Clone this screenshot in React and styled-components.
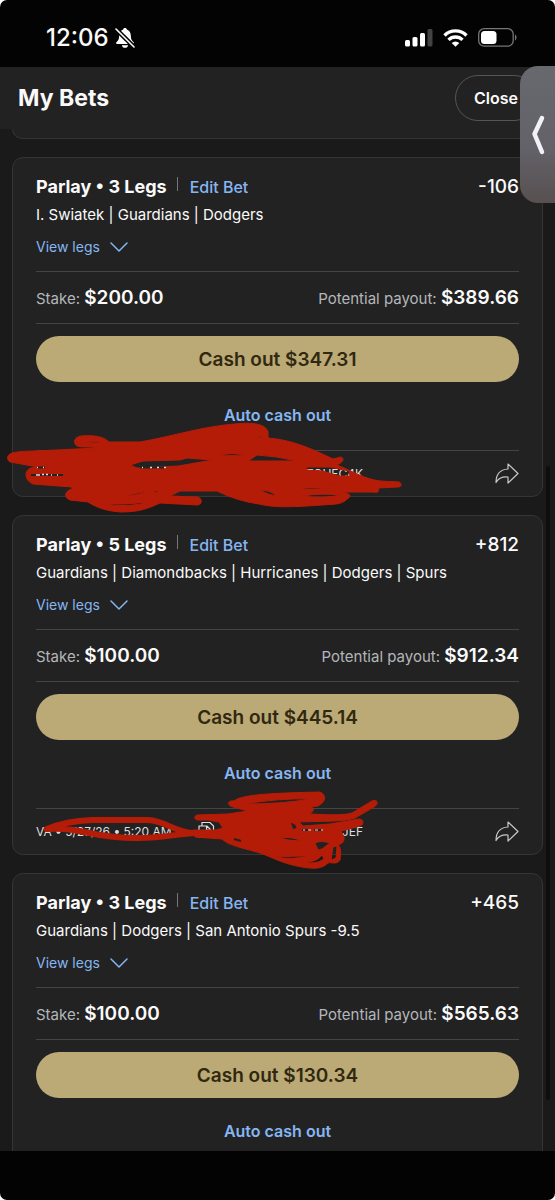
import React from "react";
import styled, { createGlobalStyle } from "styled-components";

const Global = createGlobalStyle`
  * { box-sizing: border-box; }
  body { margin: 0; background: #fff; font-family: Inter, "Liberation Sans", sans-serif; color: #fafafa; }
  button { font: inherit; border: 0; background: none; padding: 0; cursor: pointer; }
`;

const Screen = styled.div`
  position: relative;
  display: flex;
  flex-direction: column;
  height: 100vh;
  overflow: hidden;
  border-radius: 7px;
  background: #030303;
`;

const StatusBar = styled.div`
  display: flex;
  align-items: center;
  justify-content: space-between;
  flex: none;
  height: 67px;
  padding: 8px 38px 0 46px;
`;

const Clock = styled.div`
  display: flex;
  align-items: center;
  gap: 6px;
  font-size: 24px;
  line-height: 28px;
  font-weight: 500;
`;

const StatusIcons = styled.div`
  display: flex;
  align-items: center;
  gap: 10px;
`;

const Header = styled.header`
  display: flex;
  align-items: center;
  justify-content: space-between;
  flex: none;
  height: 62px;
  padding: 0 18px;
  background: #222;
`;

const Title = styled.h1`
  margin: 0;
  font-size: 23px;
  line-height: 28px;
  font-weight: 700;
`;

const CloseButton = styled.button`
  height: 46px;
  padding: 0 18px;
  border: 1px solid #555;
  border-radius: 23px;
  color: #fafafa;
  font-size: 16px;
  font-weight: 600;
`;

const Feed = styled.main`
  position: relative;
  display: flex;
  flex-direction: column;
  gap: 18px;
  flex: 1;
  overflow: hidden;
  padding: 0 12px;
  background: #1a1a1a;
`;

const PreviousCard = styled.div`
  flex: none;
  height: 10px;
  border: 1px solid #333;
  border-top: 0;
  border-radius: 0 0 10px 10px;
  background: #222;
`;

const Card = styled.article`
  position: relative;
  flex: none;
  padding: 17px 23px 0;
  border: 1px solid #353535;
  border-radius: 11px;
  background: #222;
`;

const TitleRow = styled.div`
  display: flex;
  align-items: center;
  line-height: 24px;
`;

const BetName = styled.h2`
  margin: 0;
  font-size: 18px;
  line-height: 24px;
  font-weight: 700;
`;

const Separator = styled.span`
  width: 1px;
  height: 14px;
  margin: 0 12px 6px 10px;
  background: #777;
`;

const LinkButton = styled.button`
  color: #86b6f2;
  font-size: ${(p) => (p.$light ? 14 : 16)}px;
  line-height: 20px;
  font-weight: ${(p) => (p.$light ? 400 : p.$strong ? 600 : 500)};
`;

const Odds = styled.span`
  margin-left: auto;
  font-size: 19px;
  font-weight: 500;
`;

const Legs = styled.p`
  margin: 6px 0 12px;
  font-size: 15px;
  line-height: 20px;
`;

const ViewLegs = styled(LinkButton)`
  display: flex;
  align-items: center;
  gap: 10px;
  margin-bottom: 14px;
`;

const MoneyRow = styled.div`
  display: flex;
  align-items: center;
  justify-content: space-between;
  height: 53px;
  padding-top: 2px;
  border: solid #444;
  border-width: 1px 0;
`;

const Money = styled.span`
  color: #b4b7ba;
  font-size: 15px;
  line-height: 24px;

  strong {
    color: #fafafa;
    font-size: 19px;
    font-weight: 600;
  }
`;

const CashOut = styled.button`
  display: block;
  width: 100%;
  height: 46px;
  margin-top: 12px;
  border-radius: 23px;
  background: #bba976;
  color: #30280f;
  font-size: 19px;
  font-weight: 600;
`;

const AutoRow = styled.div`
  display: flex;
  justify-content: center;
  padding: 23px 0 25px;
`;

const Footer = styled.footer`
  display: flex;
  align-items: center;
  height: 46px;
  border-top: 1px solid #444;
  color: #dedede;
  font-size: 12px;
  line-height: 16px;
`;

const Place = styled.span`
  flex: none;
  width: 162px;
`;

const Ticket = styled.span`
  display: flex;
  align-items: center;
  justify-content: space-between;
  width: 165px;
`;

const ShareButton = styled.button`
  display: flex;
  margin-left: auto;
`;

const Scribble = styled.svg`
  position: absolute;
  left: -13px;
  bottom: -21px;
  z-index: 2;
  pointer-events: none;
`;

const ScrollThumb = styled.div`
  position: absolute;
  top: 466px;
  right: 5px;
  bottom: 100px;
  width: 4px;
  border-radius: 2px;
  background: #0e0e0e;
`;

const SideTab = styled.button`
  && {
    position: absolute;
    top: 66px;
    right: 0;
    width: 35px;
    height: 137px;
    display: flex;
    align-items: center;
    justify-content: center;
    border-radius: 18px 0 0 18px;
    background: linear-gradient(#68686f, #626268 60%, #585051);
  }
`;

const BottomBar = styled.div`
  flex: none;
  height: 49px;
`;

const BellOff = () => (
  <svg width="20" height="22" viewBox="0 0 20 22" aria-hidden="true">
    <path fill="#fff" d="M10 1c-1 0-1.800.7-1.900 1.600C5.500 3.500 4.300 5.800 4.200 8.500c-.1 3.500-.8 5-2.600 6.400-.9.700-.6 2 .6 2h15.600c1.200 0 1.500-1.300.6-2-1.800-1.400-2.500-2.900-2.600-6.400-.1-2.700-1.300-5-3.900-5.900C11.800 1.700 11 1 10 1zM6.800 18.200h6.400c-.3 1.700-1.600 2.600-3.200 2.600s-2.900-.9-3.200-2.600z" />
    <path d="M1 2l18 18" stroke="#030303" strokeWidth="4.500" />
    <path d="M1 2l18 18" stroke="#fff" strokeWidth="1.600" strokeLinecap="round" />
  </svg>
);

const Signal = () => (
  <svg width="28" height="18" viewBox="0 0 28 18" aria-hidden="true">
    <g fill="#fff">
      <rect x="0" y="11" width="5" height="6.500" rx="1.500" />
      <rect x="7.500" y="8" width="5" height="9.500" rx="1.500" />
      <rect x="15" y="4" width="5" height="13.500" rx="1.500" />
      <rect x="22.500" y="0" width="5" height="17.500" rx="1.500" opacity=".25" />
    </g>
  </svg>
);

const Wifi = () => (
  <svg width="25" height="18" viewBox="0 0 25 18" aria-hidden="true">
    <g fill="none" stroke="#fff" strokeWidth="3.400">
      <path d="M1.500 6.500a15.500 15.500 0 0 1 22 0" />
      <path d="M5.500 10.900a9.900 9.900 0 0 1 14 0" />
    </g>
    <path fill="#fff" d="M8.700 13.900a5.500 5.500 0 0 1 7.600 0l-3.800 3.800z" />
  </svg>
);

const Battery = () => (
  <svg width="39" height="19" viewBox="0 0 39 19" aria-hidden="true">
    <rect x=".7" y=".7" width="34.500" height="17.500" rx="5.500" fill="none" stroke="#777" strokeWidth="1.300" />
    <rect x="3" y="3" width="15.500" height="13" rx="3.500" fill="#fff" />
    <path d="M37 6.500c2 .8 2 5 0 6z" fill="#777" />
  </svg>
);

const Chevron = () => (
  <svg width="18" height="10" viewBox="0 0 18 10" aria-hidden="true">
    <path d="M1 1l8 8 8-8" fill="none" stroke="#86b6f2" strokeWidth="1.500" strokeLinecap="round" strokeLinejoin="round" />
  </svg>
);

const Share = () => (
  <svg width="24" height="21" viewBox="0 0 24 21" aria-hidden="true">
    <path d="M13 1l10 9.500L13 20v-6C7.500 13.500 3.500 15 1 19.500 1 11 5.500 6.500 13 6z" fill="none" stroke="#c8c8c8" strokeWidth="1.200" strokeLinejoin="round" />
  </svg>
);

const Copy = () => (
  <svg width="17" height="17" viewBox="0 0 17 17" aria-hidden="true">
    <path d="M4 5V1.500h8L15.500 5v7H12M1 5h8l3 3v8H1zM8.500 5v4H12" fill="none" stroke="#dedede" strokeWidth="1.200" />
  </svg>
);

const ink = "#b51c08";

const WideScribble = () => (
  <Scribble width="420" height="101" viewBox="0 417 420 101" aria-hidden="true">
    <path
      fill={ink}
      stroke={ink}
      strokeLinejoin="round"
      fillRule="evenodd"
      d="M10 463C6 460 7 456 12 454Q20 452 35 452L98 449C90 447 83 449 77 447C72 443 75 438 81 437C93 436 103 437 109 443L140 443C170 438 204 427 235 425C252 423 266 425 268 433L268 439C293 441 312 450 333 460L341 458C345 460 343 463 337 466C350 471 364 480 380 482L399 483C402 484 402 488 398 488L378 489C380 493 377 494 373 493L340 493C350 494 353 497 347 500C342 506 333 505 322 506C293 508 276 509 259 505Q237 502 217 492L180 492L170 497L198 498C203 500 202 506 197 506L160 504C149 509 140 513 121 513C105 512 96 508 88 503L70 501C63 498 65 492 72 490L72 488L33 485C24 481 24 471 31 469L38 468Z
      M130 466L143 462L180 461L187 459L213 461L178 467L137 469Z
      M217 455Q232 454 247 455Q232 458 217 455Z
      M248 462L257 456Q276 457 297 462Z
      M256 438L262 437L261 439Z
      M85 443Q95 441 101 444Q93 444 85 443Z
      M306 468L330 468L349 472L350 477L340 477L322 472L307 471Z
      M320 480L327 484L344 487L328 485Z
      M299 490Q310 487 326 490Z
      M260 491Q270 491 277 497Q268 496 260 491ZM302 497Q320 494 341 496Q322 500 302 497Z
      M103 505Q125 506 150 503Q127 509 103 505Z
      M123 497Q135 495 147 492Q139 497 123 497ZM153 492L159 492L156 494Z"
    />
    <path d="M31 476h32M37 468.500h8M140 468.500h26" stroke="#222" strokeWidth="2" />
    <path d="M36 476h4M42 475.500h2M46 475.500h2M51 476h1M57 476h1M37 468.500h1M43 468.500h1M142 468.500h1M150 468.500h2M157 468.500h2M164 468.500h2" stroke="#dedede" strokeWidth="1.500" />
  </Scribble>
);

const LoopScribble = () => (
  <Scribble width="420" height="101" viewBox="0 776 420 101" aria-hidden="true">
    <path d="M47 831Q66 823 92 822L148 822C166 823 174 834 193 835L222 835M47 831C83 829 90 840 137 840C165 840 176 836 195 835" fill="none" stroke={ink} strokeWidth="6" strokeLinecap="round" strokeLinejoin="round" />
    <path
      fill={ink}
      stroke={ink}
      strokeLinejoin="round"
      fillRule="evenodd"
      d="M197 817L228 816L248 813L233 809C226 807 228 802 234 803C242 796 279 795 320 794C327 797 326 804 318 808L310 809C315 809 314 814 310 815L310 816Q344 818 352 815L372 803C378 801 379 806 374 809L355 820C344 824 318 823 299 824L303 828L330 826L359 821C364 821 364 827 360 828L341 833L344 839C345 845 340 846 338 847C341 849 341 855 340 862C337 867 331 864 328 865C322 871 314 871 302 869C282 866 268 857 257 854C242 850 228 847 222 841L195 839L193 832L216 832L223 830L219 824L208 822L197 822C194 821 194 818 197 817Z
      M244 806Q280 800 310 801Q283 806 244 806Z
      M290 824Q297 826 297 830L293 832Z
      M280 840Q292 838 301 843L288 842Z
      M315 845Q321 842 330 845L322 851L318 852Z
      M268 850L303 852L282 851Z
      M275 859Q295 858 309 858Q293 862 275 859Z
      M306 864Q317 864 322 857L324 861Q315 867 306 864Z
      M333 849L337 848L336 860L331 862Z"
    />
    <path d="M234 841l7 2M302 832h7M314 832h8" stroke="#222" strokeWidth="2" />
    <path d="M303 832h2M308 832h3M315 832h3M321 832h2" stroke="#dedede" strokeWidth="1" />
  </Scribble>
);

const bets = [
  { name: "Parlay • 3 Legs", odds: "-106", legs: "I. Swiatek | Guardians | Dodgers", stake: "$200.00", payout: "$389.66", cash: "$347.31",
    footer: { place: "VA", code: "TQHFC4K", mark: WideScribble } },
  { name: "Parlay • 5 Legs", odds: "+812", legs: "Guardians | Diamondbacks | Hurricanes | Dodgers | Spurs", stake: "$100.00", payout: "$912.34", cash: "$445.14",
    footer: { place: "VA • 5/27/26 • 5:20 AM", code: "JEF", copy: true, mark: LoopScribble } },
  { name: "Parlay • 3 Legs", odds: "+465", legs: "Guardians | Dodgers | San Antonio Spurs -9.5", stake: "$100.00", payout: "$565.63", cash: "$130.34" },
];

function BetCard({ bet }) {
  const { footer } = bet;
  const Mark = footer?.mark;
  return (
    <Card>
      <TitleRow>
        <BetName>{bet.name}</BetName>
        <Separator />
        <LinkButton>Edit Bet</LinkButton>
        <Odds>{bet.odds}</Odds>
      </TitleRow>
      <Legs>{bet.legs}</Legs>
      <ViewLegs $light>View legs <Chevron /></ViewLegs>
      <MoneyRow>
        <Money>Stake: <strong>{bet.stake}</strong></Money>
        <Money>Potential payout: <strong>{bet.payout}</strong></Money>
      </MoneyRow>
      <CashOut>Cash out {bet.cash}</CashOut>
      <AutoRow>
        <LinkButton $strong>Auto cash out</LinkButton>
      </AutoRow>
      {footer && (
        <Footer>
          <Place>{footer.place}</Place>
          <Ticket>
            <span>{footer.copy && <Copy />}</span>
            {footer.code}
          </Ticket>
          <ShareButton aria-label="Share bet"><Share /></ShareButton>
        </Footer>
      )}
      {Mark && <Mark />}
    </Card>
  );
}

export default function App() {
  return (
    <Screen>
      <Global />
      <StatusBar>
        <Clock>12:06 <BellOff /></Clock>
        <StatusIcons><Signal /><Wifi /><Battery /></StatusIcons>
      </StatusBar>
      <Header>
        <Title>My Bets</Title>
        <CloseButton>Close</CloseButton>
      </Header>
      <Feed>
        <PreviousCard />
        {bets.map((bet) => <BetCard key={bet.cash} bet={bet} />)}
      </Feed>
      <BottomBar />
      <ScrollThumb />
      <SideTab aria-label="Open side panel">
        <svg width="14" height="40" viewBox="0 0 14 40" aria-hidden="true">
          <path d="M11 3L3.500 19 11 37" fill="none" stroke="#f1f1fa" strokeWidth="4.500" strokeLinecap="round" strokeLinejoin="round" />
        </svg>
      </SideTab>
    </Screen>
  );
}
